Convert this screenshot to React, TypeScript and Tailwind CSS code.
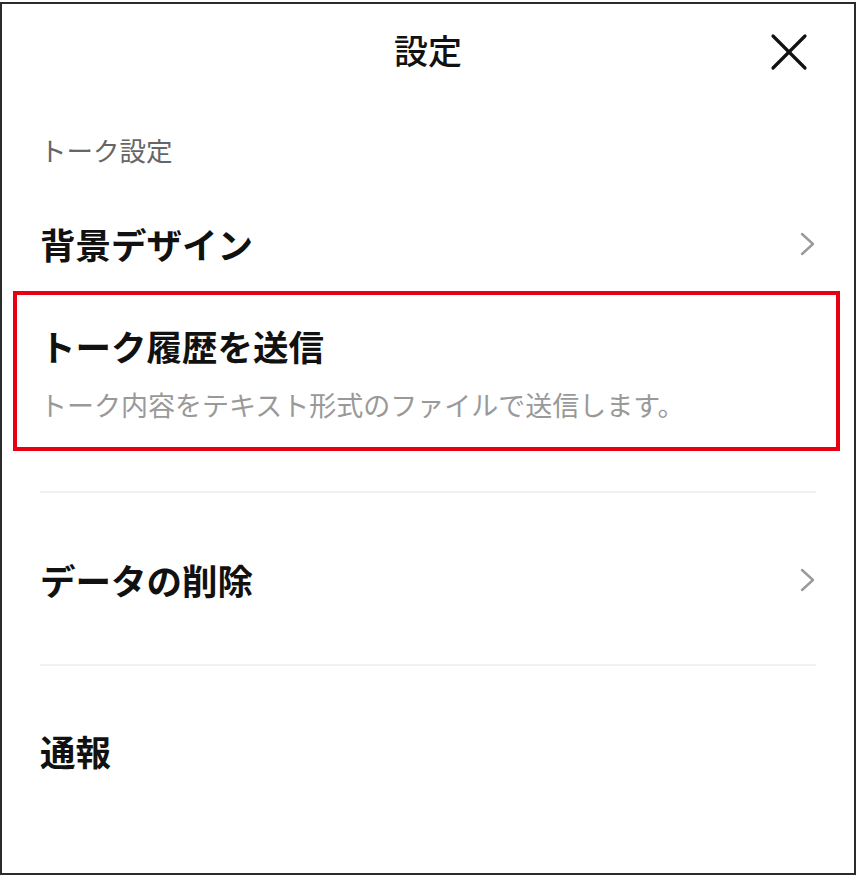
import React from "react";

const font = { fontFamily: '"Noto Sans CJK JP", "Noto Sans", sans-serif' };

function Chevron() {
  return (
    <svg width="16" height="24" viewBox="0 0 16 24" fill="none" className="shrink-0">
      <polyline points="2,2 13,12 2,22" stroke="#9a9a9a" strokeWidth="2.4" strokeLinecap="round" strokeLinejoin="round" />
    </svg>
  );
}

function CloseIcon() {
  return (
    <svg width="38" height="38" viewBox="0 0 38 38" fill="none">
      <line x1="3" y1="3" x2="35" y2="35" stroke="#111" strokeWidth="3.2" strokeLinecap="round" />
      <line x1="35" y1="3" x2="3" y2="35" stroke="#111" strokeWidth="3.2" strokeLinecap="round" />
    </svg>
  );
}

export default function App() {
  return (
    <div className="w-[856px] h-[881px] bg-white pt-[2px]" style={font}>
      <div className="h-[873px] border-2 border-[#2b2b2b] bg-white flex flex-col">
        {/* header */}
        <div className="h-[98px] relative flex items-center justify-center pb-[6px]">
          <h1 className="text-[34px] font-medium text-[#111] leading-none">設定</h1>
          <button className="absolute right-[46px] top-[29px]">
            <CloseIcon />
          </button>
        </div>

        <div className="h-[96px] flex items-center pl-[38px]">
          <span className="text-[26.5px] text-[#666] leading-none">トーク設定</span>
        </div>

        <div className="h-[92px] flex items-center justify-between pl-[38px] pr-[38px]">
          <span className="text-[35.5px] font-bold text-[#111] leading-none">背景デザイン</span>
          <Chevron />
        </div>

        <div className="h-[160px] mt-[1px] ml-[11px] mr-[14px] border-4 border-[#e60012] flex flex-col justify-center pl-[23px] pt-[4px]">
          <span className="text-[35.5px] font-bold text-[#111] leading-none">トーク履歴を送信</span>
          <span className="mt-[28px] text-[27px] text-[#999] leading-none">トーク内容をテキスト形式のファイルで送信します。</span>
        </div>

        <div className="mt-[40px] mx-[38px] h-[2px] bg-[#f1f1f1]" />

        <div className="h-[171px] flex items-center justify-between pl-[38px] pr-[38px] pt-[2px]">
          <span className="text-[35.5px] font-bold text-[#111] leading-none">データの削除</span>
          <Chevron />
        </div>

        <div className="mx-[38px] h-[2px] bg-[#f1f1f1]" />

        <div className="h-[170px] flex items-center pl-[38px]">
          <span className="text-[35.5px] font-bold text-[#111] leading-none">通報</span>
        </div>
      </div>
    </div>
  );
}
